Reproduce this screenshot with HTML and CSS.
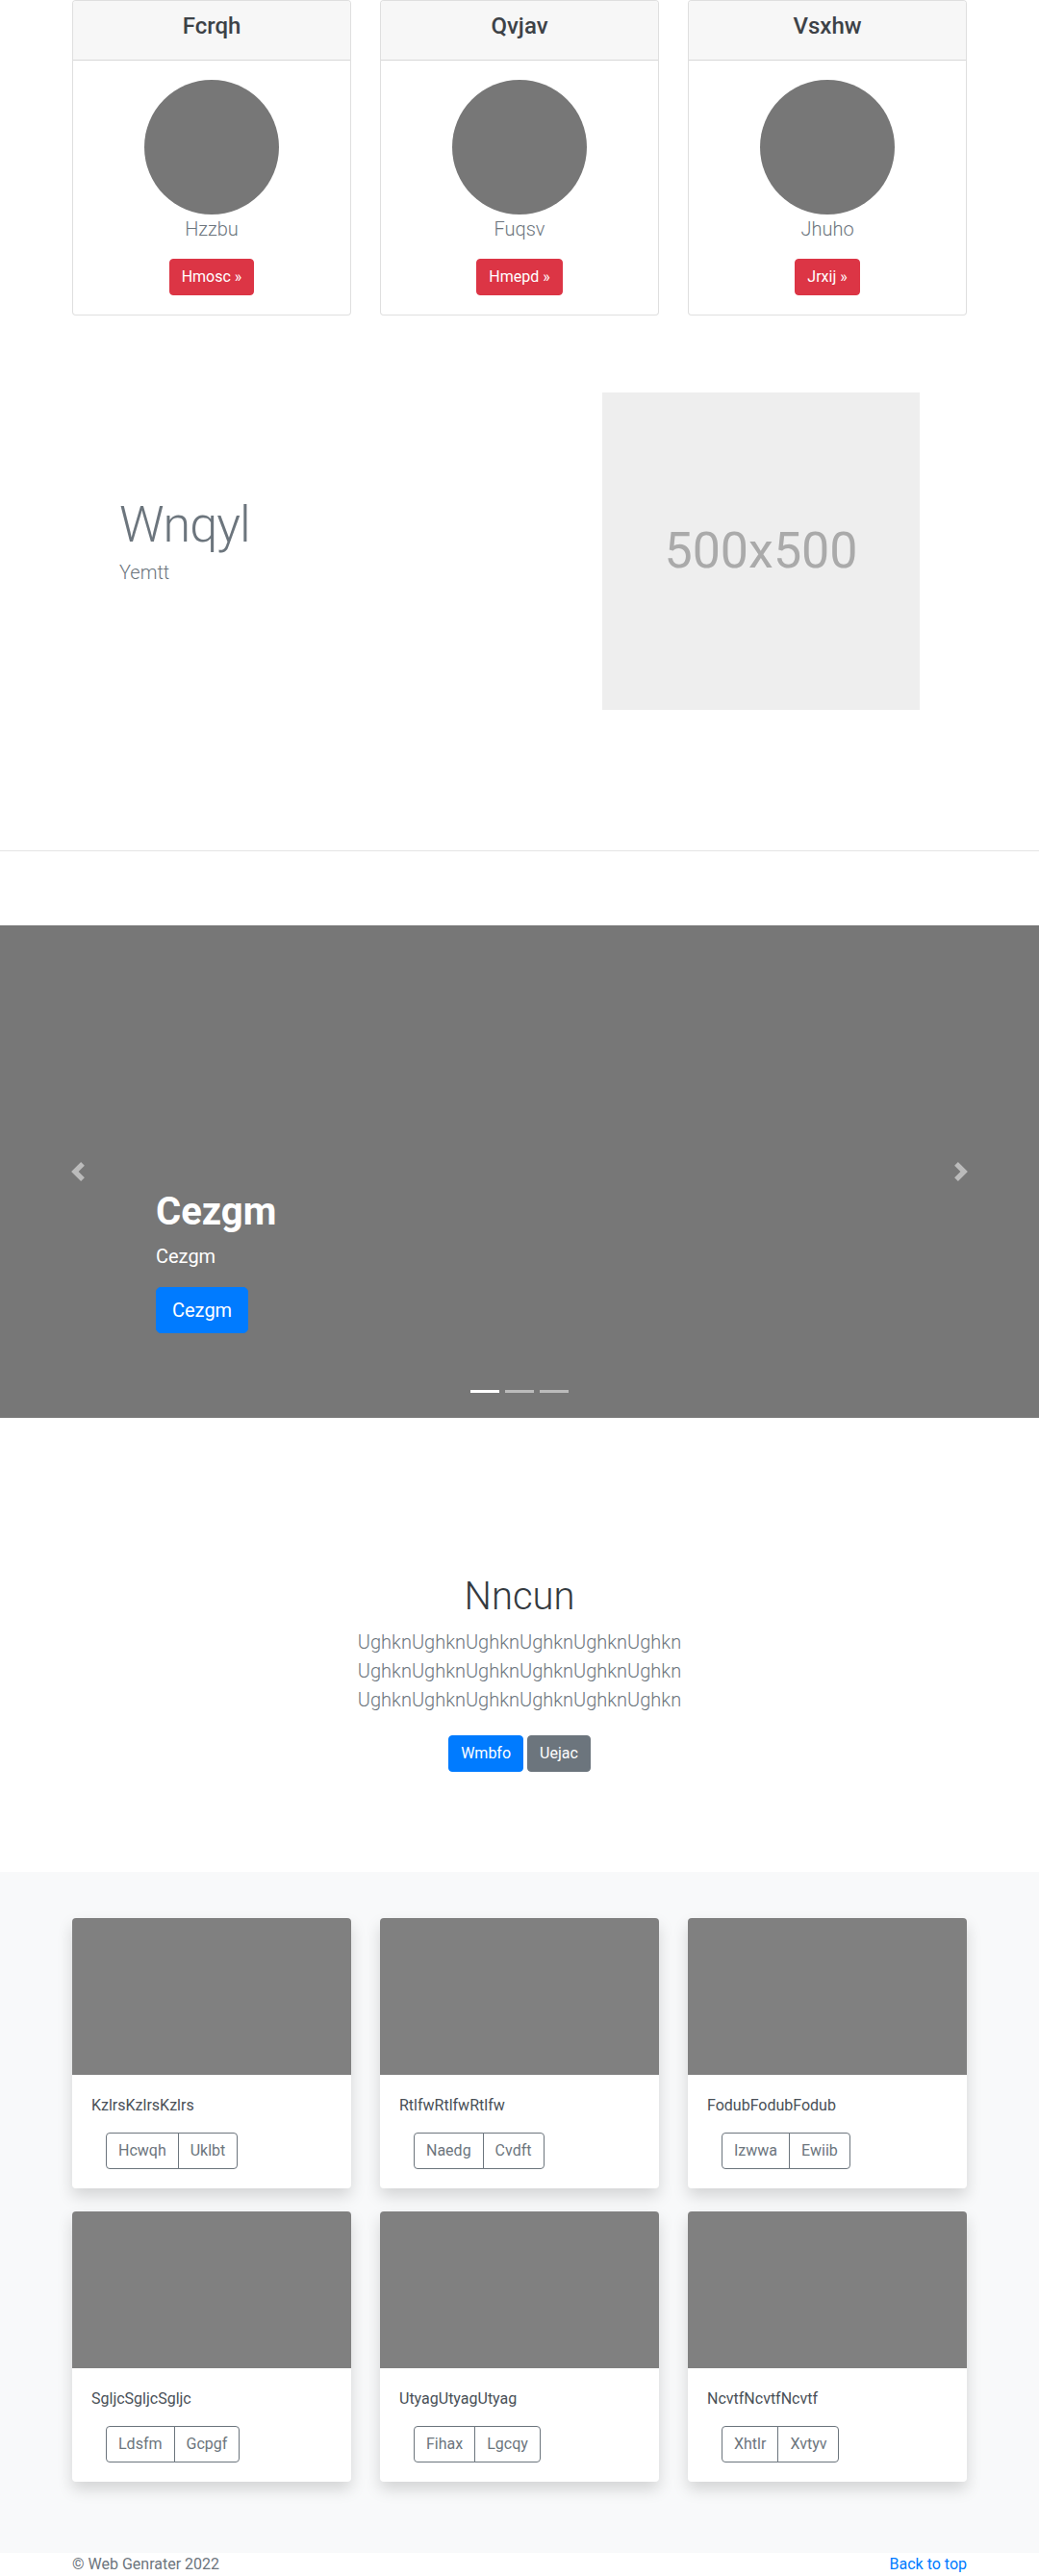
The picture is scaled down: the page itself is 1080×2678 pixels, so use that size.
FILE: index.html
```html
<!DOCTYPE html>
<html lang="en">
<head>
<meta charset="utf-8">
<title>Web Genrater</title>
<link rel="stylesheet" href="styles.css">
</head>
<body>

<section class="pricing">
  <div class="container deck">
    <div class="pcard">
      <div class="pcard-header"><h4>Fcrqh</h4></div>
      <div class="pcard-body">
        <div class="avatar"></div>
        <p class="lead muted">Hzzbu</p>
        <a class="btn btn-danger" href="#">Hmosc &raquo;</a>
      </div>
    </div>
    <div class="pcard">
      <div class="pcard-header"><h4>Qvjav</h4></div>
      <div class="pcard-body">
        <div class="avatar"></div>
        <p class="lead muted">Fuqsv</p>
        <a class="btn btn-danger" href="#">Hmepd &raquo;</a>
      </div>
    </div>
    <div class="pcard">
      <div class="pcard-header"><h4>Vsxhw</h4></div>
      <div class="pcard-body">
        <div class="avatar"></div>
        <p class="lead muted">Jhuho</p>
        <a class="btn btn-danger" href="#">Jrxij &raquo;</a>
      </div>
    </div>
  </div>
</section>

<section class="featurette">
  <div class="featurette-text">
    <h2 class="featurette-heading">Wnqyl</h2>
    <p class="lead muted">Yemtt</p>
  </div>
  <div class="placeholder">500x500</div>
</section>

<hr class="divider">

<section class="carousel">
  <div class="carousel-caption">
    <h1 class="caption-title">Cezgm</h1>
    <p class="caption-text">Cezgm</p>
    <div class="caption-actions"><a class="btn btn-lg btn-primary" href="#">Cezgm</a></div>
  </div>
  <a class="carousel-control prev" href="#" aria-label="Previous">
    <svg class="control-icon" viewBox="0 0 8 8" width="20" height="20"><path fill="#fff" d="M5.25 0l-4 4 4 4 1.5-1.5-2.5-2.5 2.5-2.5-1.5-1.5z"/></svg>
  </a>
  <a class="carousel-control next" href="#" aria-label="Next">
    <svg class="control-icon" viewBox="0 0 8 8" width="20" height="20"><path fill="#fff" d="M2.75 0l-1.5 1.5 2.5 2.5-2.5 2.5 1.5 1.5 4-4-4-4z"/></svg>
  </a>
  <ol class="indicators">
    <li class="active"></li>
    <li></li>
    <li></li>
  </ol>
</section>

<section class="jumbo">
  <h1 class="jumbo-heading">Nncun</h1>
  <p class="lead muted jumbo-lead">UghknUghknUghknUghknUghknUghkn UghknUghknUghknUghknUghknUghkn UghknUghknUghknUghknUghknUghkn</p>
  <div class="jumbo-actions">
    <a class="btn btn-primary" href="#">Wmbfo</a>
    <a class="btn btn-secondary" href="#">Uejac</a>
  </div>
</section>

<section class="album">
  <div class="container album-grid">
    <div class="acard">
      <div class="acard-img"></div>
      <div class="acard-body">
        <p class="acard-text">KzlrsKzlrsKzlrs</p>
        <div class="btn-group"><a class="btn btn-outline" href="#">Hcwqh</a><a class="btn btn-outline" href="#">Uklbt</a></div>
      </div>
    </div>
    <div class="acard">
      <div class="acard-img"></div>
      <div class="acard-body">
        <p class="acard-text">RtlfwRtlfwRtlfw</p>
        <div class="btn-group"><a class="btn btn-outline" href="#">Naedg</a><a class="btn btn-outline" href="#">Cvdft</a></div>
      </div>
    </div>
    <div class="acard">
      <div class="acard-img"></div>
      <div class="acard-body">
        <p class="acard-text">FodubFodubFodub</p>
        <div class="btn-group"><a class="btn btn-outline" href="#">Izwwa</a><a class="btn btn-outline" href="#">Ewiib</a></div>
      </div>
    </div>
    <div class="acard">
      <div class="acard-img"></div>
      <div class="acard-body">
        <p class="acard-text">SgljcSgljcSgljc</p>
        <div class="btn-group"><a class="btn btn-outline" href="#">Ldsfm</a><a class="btn btn-outline" href="#">Gcpgf</a></div>
      </div>
    </div>
    <div class="acard">
      <div class="acard-img"></div>
      <div class="acard-body">
        <p class="acard-text">UtyagUtyagUtyag</p>
        <div class="btn-group"><a class="btn btn-outline" href="#">Fihax</a><a class="btn btn-outline" href="#">Lgcqy</a></div>
      </div>
    </div>
    <div class="acard">
      <div class="acard-img"></div>
      <div class="acard-body">
        <p class="acard-text">NcvtfNcvtfNcvtf</p>
        <div class="btn-group"><a class="btn btn-outline" href="#">Xhtlr</a><a class="btn btn-outline" href="#">Xvtyv</a></div>
      </div>
    </div>
  </div>
</section>

<footer class="footer">
  <div class="container footer-row">
    <p class="footer-copy">&copy; Web Genrater 2022</p>
    <a class="footer-top" href="#">Back to top</a>
  </div>
</footer>

</body>
</html>
```
FILE: styles.css
```css
* { box-sizing: border-box; }

body {
  margin: 0;
  font-family: Roboto, "Liberation Sans", sans-serif;
  font-size: 16px;
  line-height: 1.5;
  color: #212529;
  background: #fff;
}

p { margin: 0; }
h1, h2, h4 { margin: 0; }

.container {
  width: 930px;
  margin: 0 auto;
}

.lead {
  font-size: 20px;
  font-weight: 300;
  line-height: 30px;
}

.muted { color: #6c757d; }

/* buttons */
.btn {
  display: inline-block;
  font-size: 16px;
  line-height: 24px;
  padding: 6px 12px;
  border: 1px solid transparent;
  border-radius: 4px;
  text-decoration: none;
  color: #fff;
  font-weight: 400;
  white-space: nowrap;
}
.btn-danger { background: #dc3545; border-color: #dc3545; }
.btn-primary { background: #007bff; border-color: #007bff; }
.btn-secondary { background: #6c757d; border-color: #6c757d; }
.btn-lg {
  font-size: 20px;
  line-height: 30px;
  padding: 8px 16px;
  border-radius: 5px;
}
.btn-outline {
  color: #6c757d;
  border-color: #6c757d;
  background: transparent;
}

/* pricing cards */
.deck {
  display: grid;
  grid-template-columns: repeat(3, 290px);
  column-gap: 30px;
}
.pcard {
  border: 1px solid rgba(0, 0, 0, .125);
  border-radius: 4px;
  text-align: center;
  background: #fff;
}
.pcard-header {
  background: #f7f7f7;
  padding: 12px 20px;
  border-bottom: 1px solid rgba(0, 0, 0, .125);
  border-radius: 3px 3px 0 0;
}
.pcard-header h4 {
  font-size: 24px;
  font-weight: 500;
  line-height: 1.2;
  margin-bottom: 8px;
  color: #3d4247;
}
.pcard-body {
  padding: 20px;
}
.avatar {
  width: 140px;
  height: 140px;
  border-radius: 50%;
  background: #777;
  margin: 0 auto;
}
.pcard-body .lead { margin-bottom: 16px; }

/* featurette */
.featurette {
  display: flex;
  align-items: center;
  padding: 0 124px;
  margin-top: 80px;
}
.featurette-text { flex: 1; }
.featurette-heading {
  font-size: 52px;
  font-weight: 300;
  line-height: 1;
  letter-spacing: -1px;
  color: #6c757d;
  margin-bottom: 8px;
}
.featurette-text .lead { margin-bottom: 16px; }
.placeholder {
  width: 330px;
  height: 330px;
  flex: none;
  background: #eee;
  color: #aaa;
  font-size: 52px;
  display: flex;
  align-items: center;
  justify-content: center;
}

.divider {
  border: 0;
  border-top: 1px solid rgba(0, 0, 0, .1);
  height: 0;
  margin: 146px 0 77px;
}

/* carousel */
.carousel {
  position: relative;
  height: 512px;
  background: #777;
  overflow: hidden;
}
.carousel-caption {
  position: absolute;
  left: 162px;
  right: 162px;
  bottom: 48px;
  padding-bottom: 40px;
  color: #fff;
  display: flex;
  flex-direction: column;
  align-items: flex-start;
}
.caption-title {
  font-size: 40px;
  font-weight: 700;
  line-height: 48px;
  margin-bottom: 7px;
}
.caption-text {
  font-size: 20px;
  line-height: 30px;
  margin-bottom: 17px;
}
.caption-actions { display: flex; }
.carousel-control {
  position: absolute;
  top: 0;
  bottom: 0;
  width: 162px;
  display: flex;
  align-items: center;
  justify-content: center;
  opacity: .5;
}
.carousel-control.prev { left: 0; }
.carousel-control.next { right: 0; }
.control-icon { display: block; }
.indicators {
  position: absolute;
  left: 0;
  right: 0;
  bottom: 26px;
  margin: 0;
  padding: 0;
  list-style: none;
  display: flex;
  justify-content: center;
  gap: 6px;
}
.indicators li {
  width: 30px;
  height: 3px;
  background: rgba(255, 255, 255, .5);
}
.indicators li.active { background: #fff; }

/* jumbotron */
.jumbo {
  text-align: center;
  padding: 162px 0 104px;
}
.jumbo-heading {
  font-size: 40px;
  font-weight: 300;
  line-height: 48px;
  margin-bottom: 8px;
  color: #343a40;
}
.jumbo-lead {
  width: 610px;
  margin: 0 auto;
}
.jumbo-actions {
  display: flex;
  justify-content: center;
  gap: 4px;
  margin-top: 22px;
}

/* album */
.album {
  background: #f8f9fa;
  padding: 48px 0 74px;
}
.album-grid {
  display: grid;
  grid-template-columns: repeat(3, 290px);
  column-gap: 30px;
  row-gap: 24px;
}
.acard {
  background: #fff;
  border-radius: 4px;
  box-shadow: 0 8px 16px rgba(0, 0, 0, .15);
  overflow: hidden;
}
.acard-img {
  height: 163px;
  background: #808080;
}
.acard-body {
  padding: 20px;
}
.acard-text {
  color: #495057;
  margin-bottom: 16px;
}
.btn-group {
  display: inline-flex;
  margin-left: 15px;
}
.btn-group .btn:first-child {
  border-top-right-radius: 0;
  border-bottom-right-radius: 0;
}
.btn-group .btn + .btn {
  margin-left: -1px;
  border-top-left-radius: 0;
  border-bottom-left-radius: 0;
}

/* footer */
.footer-row {
  display: flex;
  justify-content: space-between;
  color: #6c757d;
}
.footer-copy { margin: 0; }
.footer-top {
  color: #007bff;
  text-decoration: none;
}
```
